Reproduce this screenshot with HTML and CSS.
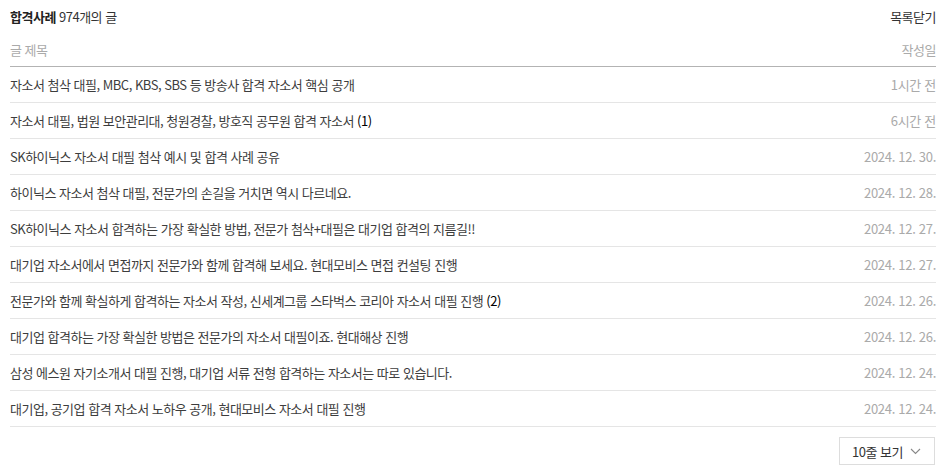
FILE: index.html
```html
<!DOCTYPE html>
<html lang="ko">
<head>
<meta charset="utf-8">
<link rel="stylesheet" href="styles.css">
</head>
<body>
<div class="board">
  <div class="board-top">
    <h2 class="board-title"><strong>합격사례</strong> 974개의 글</h2>
    <a class="close-link">목록닫기</a>
  </div>
  <div class="list-head">
    <span>글 제목</span>
    <span>작성일</span>
  </div>
  <ul class="list">
    <li class="row"><span class="subject">자소서 첨삭 대필, MBC, KBS, SBS 등 방송사 합격 자소서 핵심 공개</span><span class="date">1시간 전</span></li>
    <li class="row"><span class="subject">자소서 대필, 법원 보안관리대, 청원경찰, 방호직 공무원 합격 자소서 <em class="cnt">(1)</em></span><span class="date">6시간 전</span></li>
    <li class="row"><span class="subject">SK하이닉스 자소서 대필 첨삭 예시 및 합격 사례 공유</span><span class="date">2024. 12. 30.</span></li>
    <li class="row"><span class="subject">하이닉스 자소서 첨삭 대필, 전문가의 손길을 거치면 역시 다르네요.</span><span class="date">2024. 12. 28.</span></li>
    <li class="row"><span class="subject">SK하이닉스 자소서 합격하는 가장 확실한 방법, 전문가 첨삭+대필은 대기업 합격의 지름길!!</span><span class="date">2024. 12. 27.</span></li>
    <li class="row"><span class="subject">대기업 자소서에서 면접까지 전문가와 함께 합격해 보세요. 현대모비스 면접 컨설팅 진행</span><span class="date">2024. 12. 27.</span></li>
    <li class="row"><span class="subject">전문가와 함께 확실하게 합격하는 자소서 작성, 신세계그룹 스타벅스 코리아 자소서 대필 진행 <em class="cnt">(2)</em></span><span class="date">2024. 12. 26.</span></li>
    <li class="row"><span class="subject">대기업 합격하는 가장 확실한 방법은 전문가의 자소서 대필이죠. 현대해상 진행</span><span class="date">2024. 12. 26.</span></li>
    <li class="row"><span class="subject">삼성 에스원 자기소개서 대필 진행, 대기업 서류 전형 합격하는 자소서는 따로 있습니다.</span><span class="date">2024. 12. 24.</span></li>
    <li class="row"><span class="subject">대기업, 공기업 합격 자소서 노하우 공개, 현대모비스 자소서 대필 진행</span><span class="date">2024. 12. 24.</span></li>
  </ul>
  <div class="list-foot">
    <button class="per-page"><span>10줄 보기</span>
      <svg class="chev" width="11" height="7" viewBox="0 0 11 7"><path d="M1 1l4.5 4.5L10 1" fill="none" stroke="#888" stroke-width="1.1"/></svg>
    </button>
  </div>
</div>
</body>
</html>
```
FILE: styles.css
```css
* { box-sizing: border-box; }
html, body { margin: 0; padding: 0; background: #fff; }
body {
  font-family: "Noto Sans CJK KR", "Noto Sans", sans-serif;
  font-size: 13px;
  color: #333;
}
.board { padding: 0 13px 0 10px; }
.board-top {
  display: flex;
  justify-content: space-between;
  align-items: center;
  height: 33px;
}
.board-title {
  margin: 0;
  font-size: 13px;
  font-weight: normal;
  color: #333;
  letter-spacing: -0.5px;
}
.board-title strong { font-weight: bold; color: #222; }
.close-link { color: #333; letter-spacing: -0.5px; }
.list-head {
  display: flex;
  justify-content: space-between;
  align-items: center;
  height: 34px;
  color: #aaa;
  border-bottom: 1px solid #b3b3b3;
  letter-spacing: -0.5px;
}
.list { list-style: none; margin: 0; padding: 0; }
.row {
  display: flex;
  justify-content: space-between;
  align-items: center;
  height: 36px;
  padding-bottom: 1px;
  border-bottom: 1px solid #e5e5e5;
  letter-spacing: -0.5px;
}
.subject { color: #3d3d3d; }
.cnt { font-style: normal; color: #000; }
.date { color: #aaa; letter-spacing: -0.3px; }
.list-foot {
  display: flex;
  justify-content: flex-end;
  padding-top: 10px;
  padding-right: 1px;
}
.per-page {
  display: flex;
  align-items: center;
  justify-content: space-between;
  white-space: nowrap;
  height: 28px;
  width: 96px;
  padding: 0 13px 0 12px;
  background: #fff;
  border: 1px solid #ddd;
  font-family: inherit;
  font-size: 13px;
  color: #333;
  letter-spacing: -0.5px;
}
```
